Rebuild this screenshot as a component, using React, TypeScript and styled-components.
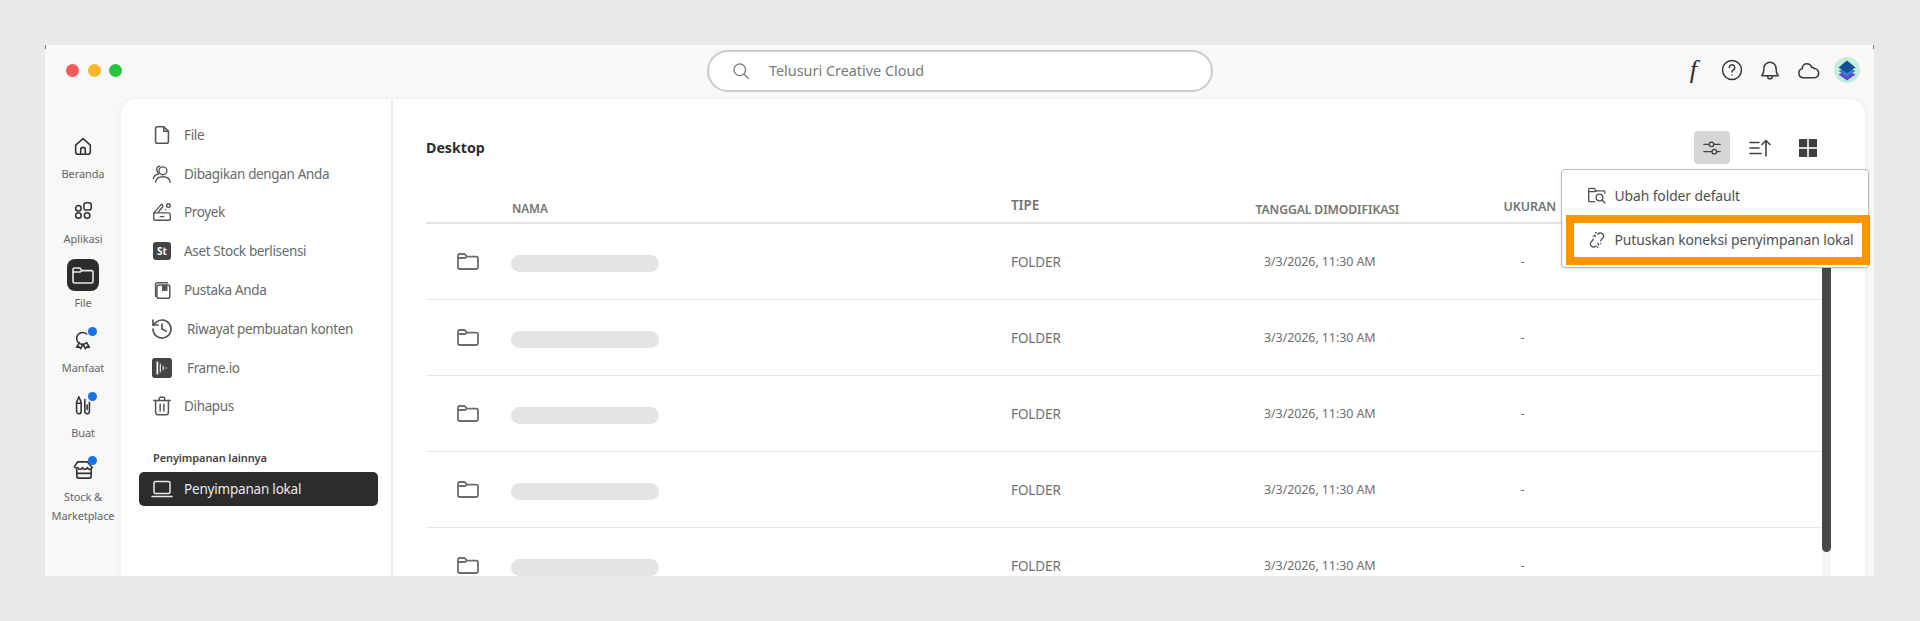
import React from "react";
import styled, { createGlobalStyle } from "styled-components";

const Global = createGlobalStyle`
  html, body { margin: 0; padding: 0; background: #e9e9e9; }
  body { font-family: "Noto Sans", "Liberation Sans", sans-serif; }
`;

const Page = styled.div`
  height: 621px;
  overflow: hidden;
  padding: 45px 46px 45px 45px;
  box-sizing: border-box;
`;
const Win = styled.div`
  position: relative;
  height: 531px;
  background: #f8f8f8;
  overflow: hidden;
  display: flex;
  flex-direction: column;
`;
const CornerTick = styled.i<{ $right?: boolean }>`
  position: absolute;
  top: 0;
  ${(p) => (p.$right ? "right: 0;" : "left: 0;")}
  width: 1px;
  height: 4px;
  background: #777;
`;
const TitleBar = styled.header`
  height: 54px;
  flex: none;
  display: grid;
  grid-template-columns: 662px 506px 1fr;
  align-items: center;
`;
const Lights = styled.div`
  display: flex;
  gap: 8.5px;
  padding-left: 21px;
  margin-top: -4px;
`;
const Light = styled.span<{ $c: string }>`
  width: 13px;
  height: 13px;
  border-radius: 50%;
  background: ${(p) => p.$c};
`;
const Search = styled.div`
  height: 42px;
  box-sizing: border-box;
  border: 2px solid #cbcbcb;
  border-radius: 21px;
  background: #fff;
  display: flex;
  align-items: center;
  gap: 18px;
  padding-left: 22px;
  margin-top: -3px;
  color: #7a7a7a;
  font-size: 14.4px;
`;
const TopIcons = styled.div`
  display: flex;
  align-items: center;
  padding-left: 461px;
  margin-top: -4px;
  color: #3a3a3a;
`;
const TopSlot = styled.div`
  width: 38.5px;
  height: 28px;
  display: flex;
  justify-content: center;
  align-items: center;
`;
const FGlyph = styled.span`
  font-family: "Liberation Serif", serif;
  font-style: italic;
  font-size: 26px;
  line-height: 28px;
  color: #2c2c2c;
`;
const Body = styled.div`
  flex: 1;
  min-height: 0;
  display: flex;
`;
const Rail = styled.nav`
  width: 76px;
  flex: none;
  display: flex;
  flex-direction: column;
  gap: 11.7px;
  padding-top: 31px;
  box-sizing: border-box;
`;
const RailItem = styled.div`
  display: flex;
  flex-direction: column;
  align-items: center;
`;
const RailIcon = styled.div<{ $active?: boolean }>`
  position: relative;
  width: 32px;
  height: 32px;
  border-radius: 8px;
  display: flex;
  align-items: center;
  justify-content: center;
  background: ${(p) => (p.$active ? "#2c2c2c" : "transparent")};
  color: ${(p) => (p.$active ? "#e8e8e8" : "#333")};
`;
const Dot = styled.i`
  position: absolute;
  top: 3px;
  right: 2.5px;
  width: 9px;
  height: 9px;
  border-radius: 50%;
  background: #1473e6;
`;
const RailLabel = styled.span`
  margin-top: 2px;
  font-size: 11px;
  line-height: 19px;
  color: #666;
  text-align: center;
  letter-spacing: -0.1px;
`;
const Panel = styled.div`
  flex: 1;
  margin-right: 9px;
  min-width: 0;
  background: #fff;
  border-radius: 15px 15px 0 0;
  box-shadow: 0 0 6px rgba(0, 0, 0, 0.05);
  display: flex;
`;
const Side = styled.aside`
  width: 270px;
  flex: none;
  border-right: 2px solid #ececec;
  padding-top: 16.5px;
  box-sizing: content-box;
`;
const SideItem = styled.div<{ $wide?: boolean }>`
  height: 38.8px;
  display: flex;
  align-items: center;
  gap: ${(p) => (p.$wide ? 13 : 10)}px;
  padding-left: 29px;
  font-size: 13.5px;
  letter-spacing: -0.35px;
  color: #6a6a6a;
`;
const IconBox = styled.span`
  width: 24px;
  height: 24px;
  flex: none;
  display: flex;
  align-items: center;
  justify-content: center;
  color: #555;
`;
const Badge = styled.span`
  width: 18px;
  height: 18px;
  border-radius: 3px;
  background: #444;
  color: #fff;
  font-size: 10px;
  font-weight: 700;
  line-height: 18px;
  text-align: center;
  letter-spacing: 0;
`;
const SideHead = styled.div`
  margin: 24.5px 0 6px 32px;
  font-size: 11px;
  line-height: 16px;
  font-weight: 600;
  letter-spacing: -0.1px;
  color: #444;
`;
const Selected = styled.div`
  margin-left: 18px;
  width: 239px;
  height: 34px;
  box-sizing: border-box;
  padding-left: 11px;
  border-radius: 5px;
  background: #2c2c2c;
  display: flex;
  align-items: center;
  gap: 10px;
  color: #e9e9e9;
  font-size: 13.5px;
  letter-spacing: -0.2px;
  ${IconBox} { color: #e9e9e9; }
`;
const Main = styled.main`
  position: relative;
  flex: 1;
  min-width: 0;
  padding: 32px 43px 0 33px;
`;
const Toolbar = styled.div`
  height: 33px;
  display: flex;
  align-items: center;
  justify-content: space-between;
`;
const Title = styled.h1`
  margin: 0;
  font-size: 14.2px;
  font-weight: 700;
  color: #2c2c2c;
`;
const Tools = styled.div`
  display: flex;
  gap: 12px;
  margin-right: -4px;
`;
const Tool = styled.div<{ $on?: boolean }>`
  width: 36px;
  height: 33px;
  border-radius: 4px;
  display: flex;
  align-items: center;
  justify-content: center;
  color: #444;
  background: ${(p) => (p.$on ? "#d6d6d6" : "transparent")};
`;
const columns = "86px 499px 244.5px 248px 1fr";
const HeadRow = styled.div`
  display: grid;
  grid-template-columns: ${columns};
  height: 60px;
  align-items: end;
  border-bottom: 2px solid #e4e4e4;
  box-sizing: border-box;
`;
const HeadCell = styled.div<{ $drop: number; $size: number }>`
  padding-bottom: ${(p) => p.$drop}px;
  font-size: ${(p) => p.$size}px;
  line-height: 16px;
  font-weight: 600;
  color: #747474;
  letter-spacing: -0.1px;
`;
const Row = styled.div`
  display: grid;
  grid-template-columns: ${columns};
  height: 76px;
  align-items: center;
  border-bottom: 1.5px solid #e9e9e9;
  box-sizing: border-box;
  font-size: 12.5px;
  letter-spacing: -0.1px;
  color: #717171;
`;
const FolderCell = styled.div`
  padding-left: 30px;
  margin-top: -1px;
  display: flex;
  color: #6e6e6e;
`;
const NamePill = styled.div`
  width: 148px;
  height: 17px;
  margin-left: -1px;
  margin-top: 3px;
  border-radius: 9px;
  background: #e4e4e4;
`;
const TypeCell = styled.div`
  font-size: 13.5px;
`;
const DateCell = styled.div`
  padding-left: 8.5px;
`;
const SizeCell = styled.div`
  padding-left: 17px;
`;
const Track = styled.div`
  position: absolute;
  left: 1429px;
  top: 165px;
  bottom: 0;
  width: 9px;
  background: #f5f5f5;
`;
const Thumb = styled.div`
  height: 288px;
  background: #484848;
  border-radius: 0 0 5px 5px;
`;
const Menu = styled.div`
  position: absolute;
  top: 70px;
  right: -4px;
  width: 308px;
  height: 99px;
  box-sizing: border-box;
  background: #fff;
  border: 1.5px solid #bdbdbd;
  border-radius: 4px;
  padding: 0 0 0 3.5px;
  box-shadow: 0 1px 3px rgba(0, 0, 0, 0.12);
  font-size: 13.9px;
  letter-spacing: -0.1px;
  color: #505050;
`;
const MenuItem = styled.div`
  height: 44.5px;
  display: flex;
  align-items: center;
  gap: 8px;
  padding: 6px 0 0 21px;
  box-sizing: border-box;
`;
const MenuHit = styled.div`
  height: 50px;
  border: 8px solid #ff9300;
  box-sizing: border-box;
  display: flex;
  align-items: center;
  gap: 8px;
  padding-left: 13px;
  margin-right: -1.5px;
  white-space: nowrap;
`;

const Svg: React.FC<{ s?: number; sw?: number; children: React.ReactNode }> = ({ s = 24, sw = 1.7, children }) => (
  <svg width={s} height={s} viewBox="0 0 24 24" fill="none" stroke="currentColor" strokeWidth={sw} strokeLinecap="round" strokeLinejoin="round">
    {children}
  </svg>
);

const FolderIcon = ({ s = 24, sw = 1.6 }: { s?: number; sw?: number }) => (
  <Svg s={s} sw={sw}>
    <path d="M2 6.500a1.500 1.500 0 0 1 1.500-1.500h5.200l2.200 2.600h9.600A1.500 1.500 0 0 1 22 9v9.500a1.500 1.500 0 0 1-1.500 1.500h-17A1.500 1.500 0 0 1 2 18.500z" />
    <path d="M2 9h7l1.900-1.400" />
  </Svg>
);

const AvatarIcon = () => (
  <svg width="26" height="26" viewBox="0 0 26 26">
    <circle cx="13" cy="13" r="13" fill="#c4eeda" />
    <path d="M4.500 17.500l8.500-4 8.500 4-8.500 6z" fill="#5f4bd6" />
    <path d="M4.500 14l8.500-4 8.500 4-8.500 5.500z" fill="#3a78d2" />
    <path d="M4.500 10.500l8.500-7 8.500 7-8.500 5.500z" fill="#124f98" />
  </svg>
);

const rail = [
  { label: "Beranda", icon: <Svg s={22}><path d="M4 11l8-7 8 7v7.500a2.500 2.500 0 0 1-2.500 2.500h-11A2.500 2.500 0 0 1 4 18.500z" /><path d="M9.500 21v-5a2.500 2.500 0 0 1 5 0v5" /></Svg> },
  { label: "Aplikasi", icon: <Svg s={22}><circle cx="7" cy="9" r="3" /><rect x="13" y="3" width="8" height="8" rx="2.500" /><circle cx="7" cy="17" r="3" /><circle cx="16.500" cy="17" r="3" /></Svg> },
  { label: "File", active: true, icon: <FolderIcon s={24} /> },
  { label: "Manfaat", dot: true, icon: <Svg s={22}><path d="M16 5.500A6.500 6.500 0 1 0 16 15" /><path d="M8 15l-3 5 3-.5 1.500 2 2.500-5 2.500 5 1.500-2 3 .5-3-5" /></Svg> },
  { label: "Buat", dot: true, icon: <Svg s={22}><path d="M5 9l2.500-6L10 9v10a2.500 2.500 0 0 1-5 0z" /><path d="M5 10h5" /><path d="M14 6v13a2.500 2.500 0 0 0 2.500 2.500A2.500 2.500 0 0 0 19 19V9" /><path d="M16.500 12v5" /></Svg> },
  { label: "Stock & Marketplace", dot: true, icon: <Svg s={23}><path d="M6 4h10l5 6a2.600 2.600 0 0 1-5 0 2.600 2.600 0 0 1-5 0 2.600 2.600 0 0 1-5 0 2.600 2.600 0 0 1-3.500-1z" /><path d="M5 12v7a2 2 0 0 0 2 2h11a2 2 0 0 0 2-2v-7" /><path d="M5 16h15" /></Svg> },
];

const side = [
  { label: "File", icon: <Svg s={22}><path d="M5 5a2 2 0 0 1 2-2h7l5 5v11a2 2 0 0 1-2 2H7a2 2 0 0 1-2-2z" /><path d="M14 3v5h5" /></Svg> },
  { label: "Dibagikan dengan Anda", icon: <Svg s={22} sw={1.5}><circle cx="13" cy="8.500" r="4.300" /><path d="M5 21c.6-4 3.600-6 8-6s7.400 2 8 6" /><path d="M9.500 3.500C6.500 3.500 6 6 6.500 8.500c.3 1.500 1 2.500 2 3.500C5.500 12.500 3 14.500 2.500 17" /></Svg> },
  { label: "Proyek", icon: <Svg s={22} sw={1.5}><circle cx="19" cy="5" r="2" /><path d="M3 13L11 4c1-1 2 0 1.500 1" /><path d="M8 12l5-6" /><rect x="3" y="13" width="18" height="8" rx="2" /><path d="M10 17h4" /><path d="M16 9.500h.01" /></Svg> },
  { label: "Aset Stock berlisensi", icon: <Badge>St</Badge> },
  { label: "Pustaka Anda", icon: <Svg s={22} sw={1.6}><path d="M5 19V6a2 2 0 0 1 2-2h11" /><rect x="6.500" y="6.500" width="14" height="14.500" rx="2" /><rect x="12" y="6.500" width="6" height="6.500" fill="currentColor" stroke="none" /></Svg> },
  { label: "Riwayat pembuatan konten", wide: true, icon: <Svg s={24} sw={1.7}><path d="M3 12a9 9 0 1 0 3-6.700L3 8" /><path d="M3 3v5h5" /><path d="M12 7v5l4 2" /></Svg> },
  { label: "Frame.io", wide: true, icon: <svg width="20" height="20" viewBox="0 0 20 20"><rect width="20" height="20" rx="3" fill="#444" /><path d="M4.500 3.500h1.700v13H4.500zM7.800 5.500c.5 0 1 .4 1 1v7c0 .6-.5 1-1 1zM10.700 7.500l1 .6v3.800l-1 .6zM13.500 9.200l2 .8-2 .8z" fill="#fff" /></svg> },
  { label: "Dihapus", icon: <Svg s={22} sw={1.6}><path d="M3 6h18" /><path d="M9 6V4a1.500 1.500 0 0 1 1.500-1.500h3A1.500 1.500 0 0 1 15 4v2" /><path d="M5 6v13a2.500 2.500 0 0 0 2.500 2.500h9A2.500 2.500 0 0 0 19 19V6" /><path d="M10 10v7.500M14 10v7.500" /></Svg> },
];

export default function App() {
  return (
    <>
      <Global />
      <Page>
        <Win>
          <CornerTick />
          <CornerTick $right />
          <TitleBar>
            <Lights>
              <Light $c="#f25a57" />
              <Light $c="#fcb62d" />
              <Light $c="#27c440" />
            </Lights>
            <Search>
              <Svg s={20} sw={1.6}>
                <circle cx="10.500" cy="10.500" r="7" />
                <path d="M15.500 15.500L21 21" />
              </Svg>
              <span>Telusuri Creative Cloud</span>
            </Search>
            <TopIcons>
              <TopSlot><FGlyph>f</FGlyph></TopSlot>
              <TopSlot>
                <Svg s={24} sw={1.5}>
                  <circle cx="12" cy="12" r="9.500" />
                  <path d="M9.300 9.500a2.700 2.700 0 1 1 4.200 2.300c-.9.600-1.500 1.100-1.500 2.200" />
                  <path d="M12 17h.01" />
                </Svg>
              </TopSlot>
              <TopSlot>
                <Svg s={28} sw={1.3}>
                  <path d="M5 17c1.200-1.500 1.800-2.500 1.800-6.500a5.200 5.200 0 0 1 10.400 0c0 4 .6 5 1.800 6.500z" />
                  <path d="M10 17.500a2 2 0 0 0 4 0" />
                </Svg>
              </TopSlot>
              <TopSlot>
                <Svg s={25} sw={1.5}>
                  <path d="M7 19a4.500 4.500 0 0 1-1-8.800 4.500 4.500 0 0 1 4-4.700 5 5 0 0 1 5 3.500 4 4 0 0 1 2.500 1 4.500 4.500 0 0 1-.5 9z" />
                </Svg>
              </TopSlot>
              <TopSlot><AvatarIcon /></TopSlot>
            </TopIcons>
          </TitleBar>
          <Body>
            <Rail>
              {rail.map((r) => (
                <RailItem key={r.label}>
                  <RailIcon $active={r.active}>
                    {r.icon}
                    {r.dot && <Dot />}
                  </RailIcon>
                  <RailLabel>{r.label === "Stock & Marketplace" ? <>Stock &amp;<br />Marketplace</> : r.label}</RailLabel>
                </RailItem>
              ))}
            </Rail>
            <Panel>
              <Side>
                {side.map((s) => (
                  <SideItem key={s.label} $wide={s.wide}>
                    <IconBox>{s.icon}</IconBox>
                    {s.label}
                  </SideItem>
                ))}
                <SideHead>Penyimpanan lainnya</SideHead>
                <Selected>
                  <IconBox>
                    <Svg s={24} sw={1.5}>
                      <rect x="4" y="4.500" width="16" height="12" rx="1.500" />
                      <path d="M2 19.500h20" />
                    </Svg>
                  </IconBox>
                  Penyimpanan lokal
                </Selected>
              </Side>
              <Main>
                <Toolbar>
                  <Title>Desktop</Title>
                  <Tools>
                    <Tool $on>
                      <Svg s={22} sw={1.4}>
                        <path d="M3 8h6M14 8h7M3 16h9M17 16h4" />
                        <circle cx="11.500" cy="8" r="2.500" />
                        <circle cx="14.500" cy="16" r="2.500" />
                      </Svg>
                    </Tool>
                    <Tool>
                      <Svg s={24} sw={1.6}>
                        <path d="M2 6.500h9M2 12h9M2 17.500h11" />
                        <path d="M18 20V4.500M14 8.500l4-4 4 4" />
                      </Svg>
                    </Tool>
                    <Tool>
                      <svg width="18" height="18" viewBox="0 0 18 18" fill="#3e3e3e">
                        <rect width="8.200" height="8.200" />
                        <rect x="9.800" width="8.200" height="8.200" />
                        <rect y="9.800" width="8.200" height="8.200" />
                        <rect x="9.800" y="9.800" width="8.200" height="8.200" />
                      </svg>
                    </Tool>
                  </Tools>
                </Toolbar>
                <HeadRow>
                  <span />
                  <HeadCell $drop={6} $size={11.8}>NAMA</HeadCell>
                  <HeadCell $drop={9} $size={13.5}>TIPE</HeadCell>
                  <HeadCell $drop={4} $size={12.2}>TANGGAL DIMODIFIKASI</HeadCell>
                  <HeadCell $drop={7} $size={12.5}>UKURAN</HeadCell>
                </HeadRow>
                {[0, 1, 2, 3, 4].map((i) => (
                  <Row key={i}>
                    <FolderCell><FolderIcon s={24} sw={1.8} /></FolderCell>
                    <NamePill />
                    <TypeCell>FOLDER</TypeCell>
                    <DateCell>3/3/2026, 11:30 AM</DateCell>
                    <SizeCell>-</SizeCell>
                  </Row>
                ))}
                <Track>
                  <Thumb />
                </Track>
                <Menu>
                  <MenuItem>
                    <Svg s={20} sw={1.6}>
                      <path d="M9 20H3.500A1.500 1.500 0 0 1 2 18.500v-13A1.500 1.500 0 0 1 3.500 4h5L11 7h9a1.500 1.500 0 0 1 1.500 1.500V10" />
                      <path d="M2 8h7l2-1" />
                      <circle cx="15" cy="15" r="4" />
                      <path d="M18 18l3.500 3.500" />
                    </Svg>
                    Ubah folder default
                  </MenuItem>
                  <MenuHit>
                    <Svg s={20} sw={1.6}>
                      <path d="M13 5a4 4 0 0 1 7 2.500c0 2.500-3 3-3.500 5.500" />
                      <path d="M16.500 16.500h.01" />
                      <path d="M11 19a4 4 0 0 1-7-2.500c0-2.500 3-3 3.500-5.500" />
                      <path d="M7.500 7.500h.01" />
                      <path d="M13 16l1 2M10 8l-1-2M12.500 20.500l.5.5M11 3.500l-.5-.5" />
                    </Svg>
                    Putuskan koneksi penyimpanan lokal
                  </MenuHit>
                </Menu>
              </Main>
            </Panel>
          </Body>
        </Win>
      </Page>
    </>
  );
}
